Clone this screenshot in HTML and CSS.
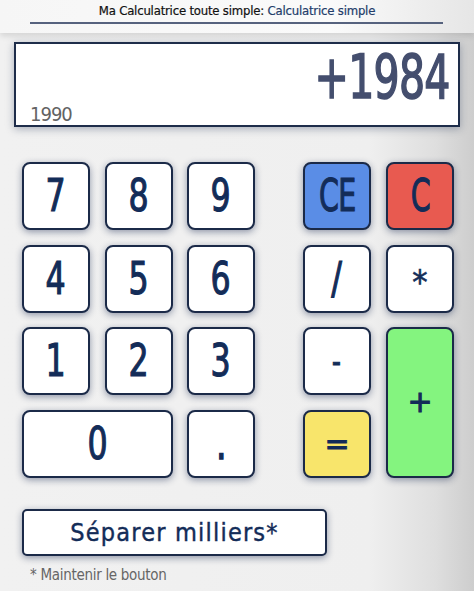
FILE: index.html
```html
<!DOCTYPE html>
<html lang="fr">
<head>
<meta charset="utf-8">
<title>Calculatrice simple</title>
<link rel="stylesheet" href="styles.css">
</head>
<body>
<header class="top">
  <h1 class="title">Ma Calculatrice toute simple: <span class="title-app">Calculatrice simple</span></h1>
  <div class="rule"></div>
</header>
<main class="calc">
  <section class="display">
    <div class="result"><span class="result-text">+1984</span></div>
    <div class="history">1990</div>
  </section>
  <section class="keypad">
    <div class="keys-num">
      <button class="key"><span class="lbl">7</span></button>
      <button class="key"><span class="lbl">8</span></button>
      <button class="key"><span class="lbl">9</span></button>
      <button class="key"><span class="lbl">4</span></button>
      <button class="key"><span class="lbl">5</span></button>
      <button class="key"><span class="lbl">6</span></button>
      <button class="key"><span class="lbl">1</span></button>
      <button class="key"><span class="lbl">2</span></button>
      <button class="key"><span class="lbl">3</span></button>
      <button class="key key-zero"><span class="lbl">0</span></button>
      <button class="key key-dot"><span class="lbl">.</span></button>
    </div>
    <div class="keys-op">
      <button class="key key-ce"><span class="lbl">CE</span></button>
      <button class="key key-c"><span class="lbl">C</span></button>
      <button class="key key-slash"><span class="lbl">/</span></button>
      <button class="key key-sym"><span class="lbl">*</span></button>
      <button class="key key-minus"><span class="lbl">-</span></button>
      <button class="key key-plus"><span class="lbl">+</span></button>
      <button class="key key-eq"><span class="lbl">=</span></button>
    </div>
  </section>
  <button class="sep">Séparer milliers*</button>
  <p class="note">* Maintenir le bouton</p>
</main>
</body>
</html>
```
FILE: styles.css
```css
html, body {
  margin: 0;
  padding: 0;
}
body {
  width: 474px;
  height: 591px;
  overflow: hidden;
  font-family: "DejaVu Sans Condensed", "Liberation Sans", sans-serif;
  background: linear-gradient(to right, #f1f1f1 0%, #efefef 78%, #dedede 92%, #cdcdcd 100%);
}
.top {
  height: 33px;
  padding-top: 3px;
  box-sizing: border-box;
  background: linear-gradient(to right, #f6f6f6 0%, #fafafa 70%, #e6e6e6 100%);
  box-shadow: 0 3px 6px rgba(0, 0, 0, 0.12);
}
.title {
  margin: 0;
  text-align: center;
  font-size: 13px;
  font-weight: normal;
  line-height: 16px;
  color: #111;
  letter-spacing: -0.2px;
  -webkit-text-stroke: 0.2px #111;
}
.title-app {
  color: #233d6a;
  -webkit-text-stroke: 0.2px #233d6a;
}
.rule {
  margin: 3px 31px 0 30px;
  height: 2px;
  background: #56627e;
}
.calc {
  padding: 9px 14px 0 14px;
}
.display {
  height: 85px;
  box-sizing: border-box;
  border: 2px solid #1e2d4a;
  background: #fff;
  box-shadow: 0 2px 8px rgba(30, 45, 80, 0.35);
  display: flex;
  flex-direction: column;
  padding: 4px 8px 0 14px;
}
.result {
  text-align: right;
  font-size: 60px;
  line-height: 58px;
  height: 58px;
  color: #444e6e;
}
.result-text {
  display: inline-block;
  transform: scaleX(0.76);
  transform-origin: right center;
  letter-spacing: -1px;
  -webkit-text-stroke: 1.5px #444e6e;
}
.history {
  font-size: 20px;
  line-height: 20px;
  color: #636363;
  margin-top: -2px;
  letter-spacing: -1px;
}
.keypad {
  display: flex;
  gap: 48px;
  margin: 35px 0 0 8px;
}
.keys-num, .keys-op {
  display: grid;
  grid-template-rows: repeat(4, 68px);
  row-gap: 14.5px;
}
.keys-num {
  grid-template-columns: repeat(3, 68px);
  column-gap: 14.5px;
}
.keys-op {
  grid-template-columns: repeat(2, 68px);
  column-gap: 15px;
}
.key {
  margin: 0;
  padding: 0;
  border: 2px solid #1b2a48;
  border-radius: 8px;
  background: #fff;
  box-shadow: 0 2px 7px rgba(25, 40, 80, 0.45);
  font-family: inherit;
  font-size: 44px;
  color: #132c58;
  line-height: 1;
}
.lbl {
  display: inline-block;
  transform: scaleX(0.8);
  -webkit-text-stroke: 1.1px #132c58;
}
.key-zero {
  grid-column: span 2;
}
.key-ce .lbl, .key-c .lbl {
  letter-spacing: -1px;
  transform: scaleX(0.72);
}
.key-sym {
  font-size: 34px;
  padding-top: 6px;
}
.key-sym .lbl {
  transform: none;
  -webkit-text-stroke: 0.6px #132c58;
}
.key-ce {
  background: #5a8de6;
}
.key-c {
  background: #e85a50;
}
.key-minus {
  font-size: 34px;
}
.key-dot .lbl {
  -webkit-text-stroke: 1.6px #132c58;
}
.key-plus, .key-eq {
  font-family: "DejaVu Sans", sans-serif;
  font-size: 30px;
}
.key-plus .lbl, .key-eq .lbl {
  transform: none;
  -webkit-text-stroke: 0.9px #132c58;
}
.key-plus {
  grid-column: 2;
  grid-row: 3 / span 2;
  background: #84f47f;
}
.key-eq {
  grid-column: 1;
  grid-row: 4;
  background: #f8e56b;
}
.sep {
  display: block;
  margin: 31px 0 0 8px;
  width: 305px;
  height: 47px;
  border: 2px solid #1b2a48;
  border-radius: 5px;
  background: #fff;
  box-shadow: 0 2px 7px rgba(25, 40, 80, 0.45);
  font-family: inherit;
  font-size: 25px;
  letter-spacing: 1.2px;
  color: #132c58;
  -webkit-text-stroke: 0.4px #132c58;
  padding: 0;
}
.note {
  margin: 10px 0 0 16px;
  font-size: 15px;
  color: #666;
  letter-spacing: -0.3px;
}
```
